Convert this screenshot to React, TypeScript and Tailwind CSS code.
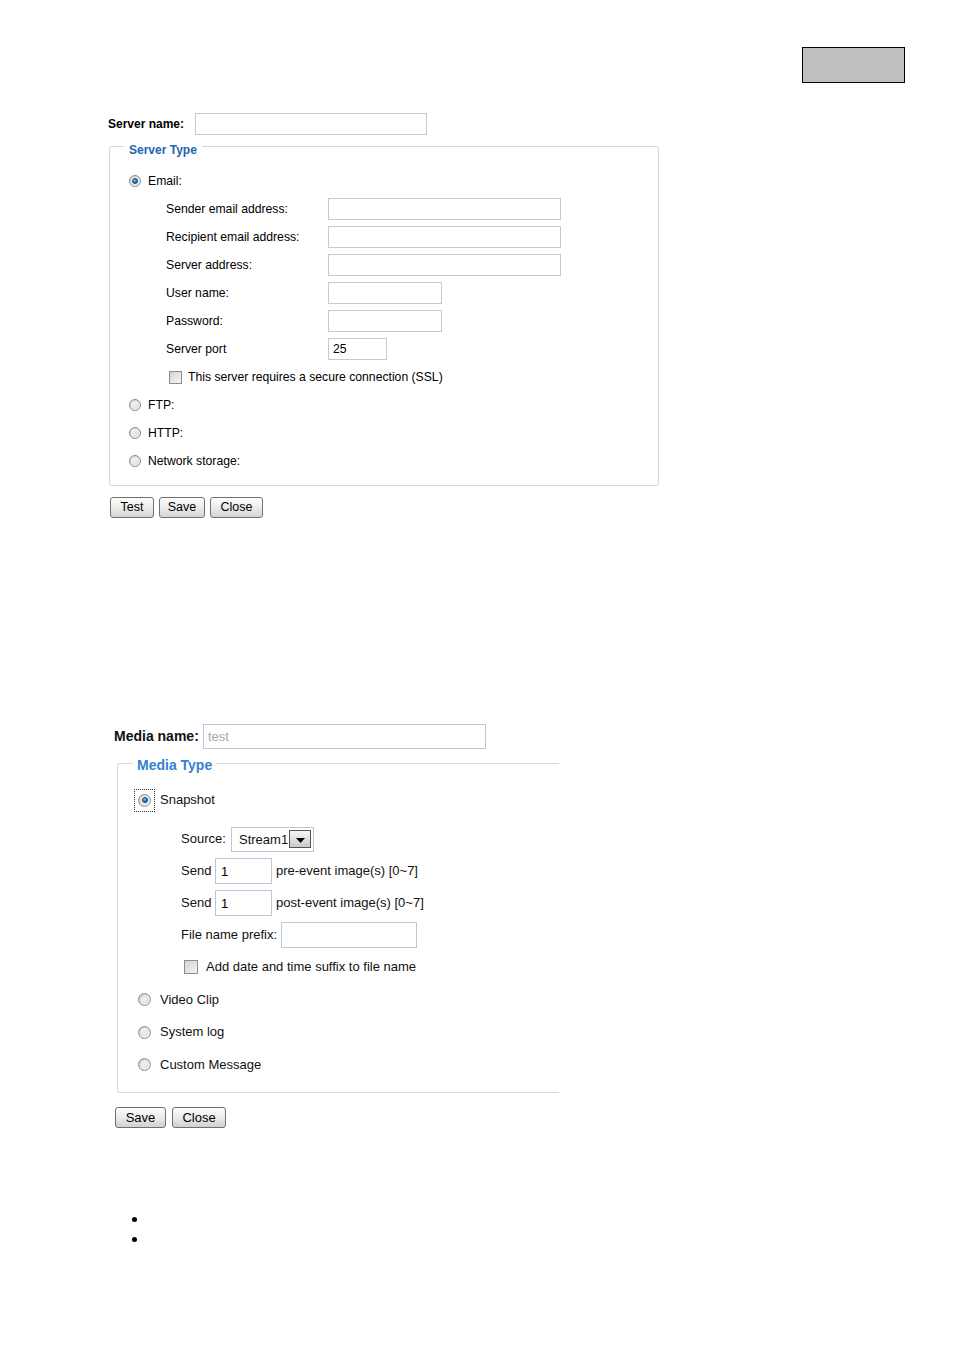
import React from 'react';

const font = { fontFamily: '"Liberation Sans", Arial, sans-serif' };

const Radio = ({ checked = false, size = 12 }: { checked?: boolean; size?: number }) => (
  <span
    className={`flex shrink-0 items-center justify-center rounded-full border border-[#8d8d8d] bg-linear-to-br from-[#c9c9c9] to-[#fbfbfb] ${
      size === 12 ? 'h-[12px] w-[12px]' : 'h-[13px] w-[13px]'
    }`}
  >
    <span className="flex h-[8px] w-[8px] items-center justify-center rounded-full bg-linear-to-br from-[#f4f4f4] to-[#dedede]">
      {checked && (
        <span className="h-[6px] w-[6px] rounded-full border border-[#164f86] bg-[radial-gradient(circle_at_40%_35%,#7fc3f2,#1c6eb8_60%,#0c3f73)]" />
      )}
    </span>
  </span>
);

const Checkbox = ({ size = 12 }: { size?: number }) => (
  <span
    className={`flex shrink-0 items-center justify-center border border-[#8d8d8d] bg-linear-to-br from-[#d2d2d2] to-[#f6f6f6] ${
      size === 12 ? 'h-[13px] w-[13px]' : 'h-[14px] w-[14px]'
    }`}
  >
    <span className="h-[7px] w-[7px] bg-linear-to-br from-[#dcdcdc] to-[#efefef]" />
  </span>
);

const Btn = ({ label, w }: { label: string; w: string }) => (
  <button
    className={`flex h-[21px] items-center justify-center rounded-[3px] border border-[#707070] bg-linear-to-b from-[#fdfdfd] via-[#ececec] to-[#d4d4d4] text-[12.5px] text-black ${w}`}
  >
    {label}
  </button>
);

const FieldRow = ({ label, w, value }: { label: string; w: string; value?: string }) => (
  <div className="flex h-[28px] items-center pl-[37px]">
    <span className="w-[162px]">{label}</span>
    <input
      readOnly
      value={value ?? ''}
      className={`h-[22px] border border-[#c3cad4] bg-white px-[4px] text-[12.2px] text-black outline-none ${w}`}
    />
  </div>
);

const RadioRow = ({ label, checked }: { label: string; checked?: boolean }) => (
  <div className="flex h-[28px] items-center gap-[7px]">
    <Radio checked={checked} />
    <span>{label}</span>
  </div>
);

const ServerForm = () => (
  <div className="ml-[108px] text-[12.2px] text-black">
    <div className="flex h-[22px] items-center">
      <span className="w-[87px] text-[12px] font-bold">Server name:</span>
      <input readOnly className="h-[22px] w-[232px] border border-[#c3cad4] bg-white outline-none" />
    </div>
    <fieldset className="ml-[1px] w-[550px] rounded-[3px] border border-[#d3d7dc] pb-[10px] pl-[19px] pt-[9px]">
      <legend className="ml-[-5px] px-[5px] pt-[8px] text-[12px] font-bold leading-[15px] text-[#1e64b0]">
        Server Type
      </legend>
      <RadioRow label="Email:" checked />
      <FieldRow label="Sender email address:" w="w-[233px]" />
      <FieldRow label="Recipient email address:" w="w-[233px]" />
      <FieldRow label="Server address:" w="w-[233px]" />
      <FieldRow label="User name:" w="w-[114px]" />
      <FieldRow label="Password:" w="w-[114px]" />
      <FieldRow label="Server port" w="w-[59px]" value="25" />
      <div className="flex h-[28px] items-center gap-[6px] pl-[40px]">
        <Checkbox />
        <span>This server requires a secure connection (SSL)</span>
      </div>
      <RadioRow label="FTP:" />
      <RadioRow label="HTTP:" />
      <RadioRow label="Network storage:" />
    </fieldset>
    <div className="ml-[2px] mt-[11px] flex gap-[5px]">
      <Btn label="Test" w="w-[44px]" />
      <Btn label="Save" w="w-[46px]" />
      <Btn label="Close" w="w-[53px]" />
    </div>
  </div>
);

const MediaRadio = ({ label, h = 'h-[32px]' }: { label: string; h?: string }) => (
  <div className={`flex items-center ${h}`}>
    <span className="flex w-[26px] justify-start pl-[4px]">
      <Radio size={13} />
    </span>
    <span>{label}</span>
  </div>
);

const MediaInput = ({ w, value }: { w: string; value?: string }) => (
  <input
    readOnly
    value={value ?? ''}
    className={`h-[26px] border border-[#bcc8d8] bg-white px-[5px] text-[13px] text-black outline-none ${w}`}
  />
);

const MediaForm = () => (
  <div className="ml-[114px] mt-[206px] text-[13px] text-[#111]">
    <div className="flex h-[25px] items-center">
      <span className="w-[89px] text-[14px] font-bold">Media name:</span>
      <input
        readOnly
        value="test"
        className="h-[25px] w-[283px] border border-[#bcc8d8] bg-white px-[4px] text-[13px] text-[#a8a8a8] outline-none"
      />
    </div>
    <fieldset className="ml-[3px] mt-[4px] w-[442px] rounded-l-[3px] border border-r-0 border-[#d6dadf] pb-[11px] pl-[16px] pt-[11px]">
      <legend className="ml-[-1px] px-[4px] pt-[4px] text-[14px] font-bold leading-[16px] text-[#3582d0]">
        Media Type
      </legend>
      <div className="flex h-[32px] items-center">
        <span className="flex h-[23px] w-[21px] items-center justify-center border border-dotted border-[#333]">
          <Radio checked size={13} />
        </span>
        <span className="ml-[5px]">Snapshot</span>
      </div>
      <div className="mt-[7px] flex h-[32px] items-center pl-[47px]">
        <span className="w-[50px]">Source:</span>
        <span className="flex h-[25px] w-[83px] items-center border border-[#bcc8d8] bg-white pl-[7px] pr-[2px]">
          <span className="mt-[2px] flex-1">Stream1</span>
          <span className="flex h-[18px] w-[22px] items-center justify-center border border-[#555] bg-linear-to-b from-[#f6f6f6] to-[#c9c9c9]">
            <svg width="9" height="5" viewBox="0 0 9 5" className="mt-[2px]">
              <path d="M0 0h9L4.5 5z" fill="#000" />
            </svg>
          </span>
        </span>
      </div>
      <div className="flex h-[32px] items-center pl-[47px]">
        <span className="w-[34px]">Send</span>
        <MediaInput w="w-[57px]" value="1" />
        <span className="ml-[4px]">pre-event image(s) [0~7]</span>
      </div>
      <div className="flex h-[32px] items-center pl-[47px]">
        <span className="w-[34px]">Send</span>
        <MediaInput w="w-[57px]" value="1" />
        <span className="ml-[4px]">post-event image(s) [0~7]</span>
      </div>
      <div className="flex h-[32px] items-center pl-[47px]">
        <span className="w-[100px]">File name prefix:</span>
        <MediaInput w="w-[136px]" />
      </div>
      <div className="flex h-[32px] items-center gap-[8px] pl-[50px]">
        <Checkbox size={14} />
        <span>Add date and time suffix to file name</span>
      </div>
      <MediaRadio label="Video Clip" h="h-[33px]" />
      <MediaRadio label="System log" />
      <MediaRadio label="Custom Message" h="h-[33px]" />
    </fieldset>
    <div className="ml-[1px] mt-[14px] flex gap-[6px]">
      <button className="flex h-[21px] w-[51px] items-center justify-center rounded-[3px] border border-[#707070] bg-linear-to-b from-[#fdfdfd] via-[#ececec] to-[#d0d0d0] text-[13px] text-black">
        Save
      </button>
      <button className="flex h-[21px] w-[54px] items-center justify-center rounded-[3px] border border-[#707070] bg-linear-to-b from-[#fdfdfd] via-[#ececec] to-[#d0d0d0] text-[13px] text-black">
        Close
      </button>
    </div>
  </div>
);

export default function App() {
  return (
    <div className="min-h-[1350px] w-[954px] bg-white pt-[47px]" style={font}>
      <div className="flex justify-end pr-[49px]">
        <div className="h-[36px] w-[103px] border border-black bg-[#c0c0c0]" />
      </div>
      <div className="mt-[30px]">
        <ServerForm />
      </div>
      <MediaForm />
      <div className="ml-[132px] mt-[89px] flex flex-col gap-[15px]">
        <span className="h-[5px] w-[5px] rounded-full bg-black" />
        <span className="h-[5px] w-[5px] rounded-full bg-black" />
      </div>
    </div>
  );
}
